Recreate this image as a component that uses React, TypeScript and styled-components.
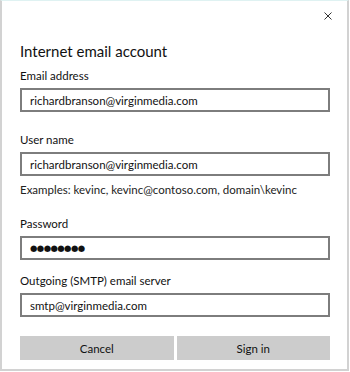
import React from "react";
import styled, { createGlobalStyle } from "styled-components";

const Global = createGlobalStyle`
  html, body { margin: 0; padding: 0; background: #ffffff; }
  body { font-family: Lato, "Open Sans", sans-serif; color: #000; }
`;

const Frame = styled.div`
  box-sizing: border-box;
  width: 349px;
  height: 371px;
  border-top: 1px solid #dff2f2;
  border-left: 2px solid #d2d2d2;
  border-right: 2px solid #d2d2d2;
  border-bottom: 2px solid #d2d2d2;
  background: #fff;
  padding: 0 17px 0 18px;
  display: flex;
  flex-direction: column;
`;

const TopBar = styled.div`
  display: flex;
  justify-content: flex-end;
  height: 39px;
  padding-top: 9px;
  box-sizing: border-box;
`;

const CloseButton = styled.button`
  width: 12px;
  height: 12px;
  padding: 0;
  margin-right: -4px;
  border: none;
  background: none;
  display: flex;
  align-items: center;
  justify-content: center;
`;

const Title = styled.h1`
  margin: 0;
  font-size: 15px;
  line-height: 22px;
  font-weight: 400;
  color: #111;
`;

const Field = styled.div<{ $top: number }>`
  display: flex;
  flex-direction: column;
  margin-top: ${(p) => p.$top}px;
`;

const Label = styled.label`
  font-size: 11.5px;
  line-height: 16px;
  color: #111;
  margin-bottom: 4px;
`;

const Input = styled.div`
  box-sizing: border-box;
  height: 24px;
  border: 2px solid #7d7d7d;
  padding: 0 8px;
  display: flex;
  align-items: center;
  font-size: 11.5px;
  color: #111;
`;

const Dots = styled.span`
  font-family: "DejaVu Sans", sans-serif;
  font-size: 8.5px;
  letter-spacing: -0.6px;
`;

const Hint = styled.div`
  margin-top: 6px;
  font-size: 11.5px;
  line-height: 16px;
  color: #222;
`;

const Buttons = styled.div`
  margin-top: 19px;
  display: grid;
  grid-template-columns: 1fr 1fr;
  gap: 3px;
`;

const Button = styled.button`
  height: 24px;
  border: none;
  background: #cccccc;
  font-family: inherit;
  font-size: 11.5px;
  color: #111;
  padding: 0;
`;

export default function App() {
  return (
    <>
      <Global />
      <Frame>
        <TopBar>
          <CloseButton aria-label="Close">
            <svg width="8" height="8" viewBox="0 0 8 8">
              <path d="M0.5 0.5L7.5 7.5M7.5 0.5L0.5 7.5" stroke="#333" strokeWidth="1" />
            </svg>
          </CloseButton>
        </TopBar>
        <Title>Internet email account</Title>
        <Field $top={6}>
          <Label>Email address</Label>
          <Input>richardbranson@virginmedia.com</Input>
        </Field>
        <Field $top={20}>
          <Label>User name</Label>
          <Input>richardbranson@virginmedia.com</Input>
        </Field>
        <Hint>Examples: kevinc, kevinc@contoso.com, domain\kevinc</Hint>
        <Field $top={18}>
          <Label>Password</Label>
          <Input>
            <Dots>●●●●●●●●</Dots>
          </Input>
        </Field>
        <Field $top={13}>
          <Label>Outgoing (SMTP) email server</Label>
          <Input>smtp@virginmedia.com</Input>
        </Field>
        <Buttons>
          <Button>Cancel</Button>
          <Button>Sign in</Button>
        </Buttons>
      </Frame>
    </>
  );
}
